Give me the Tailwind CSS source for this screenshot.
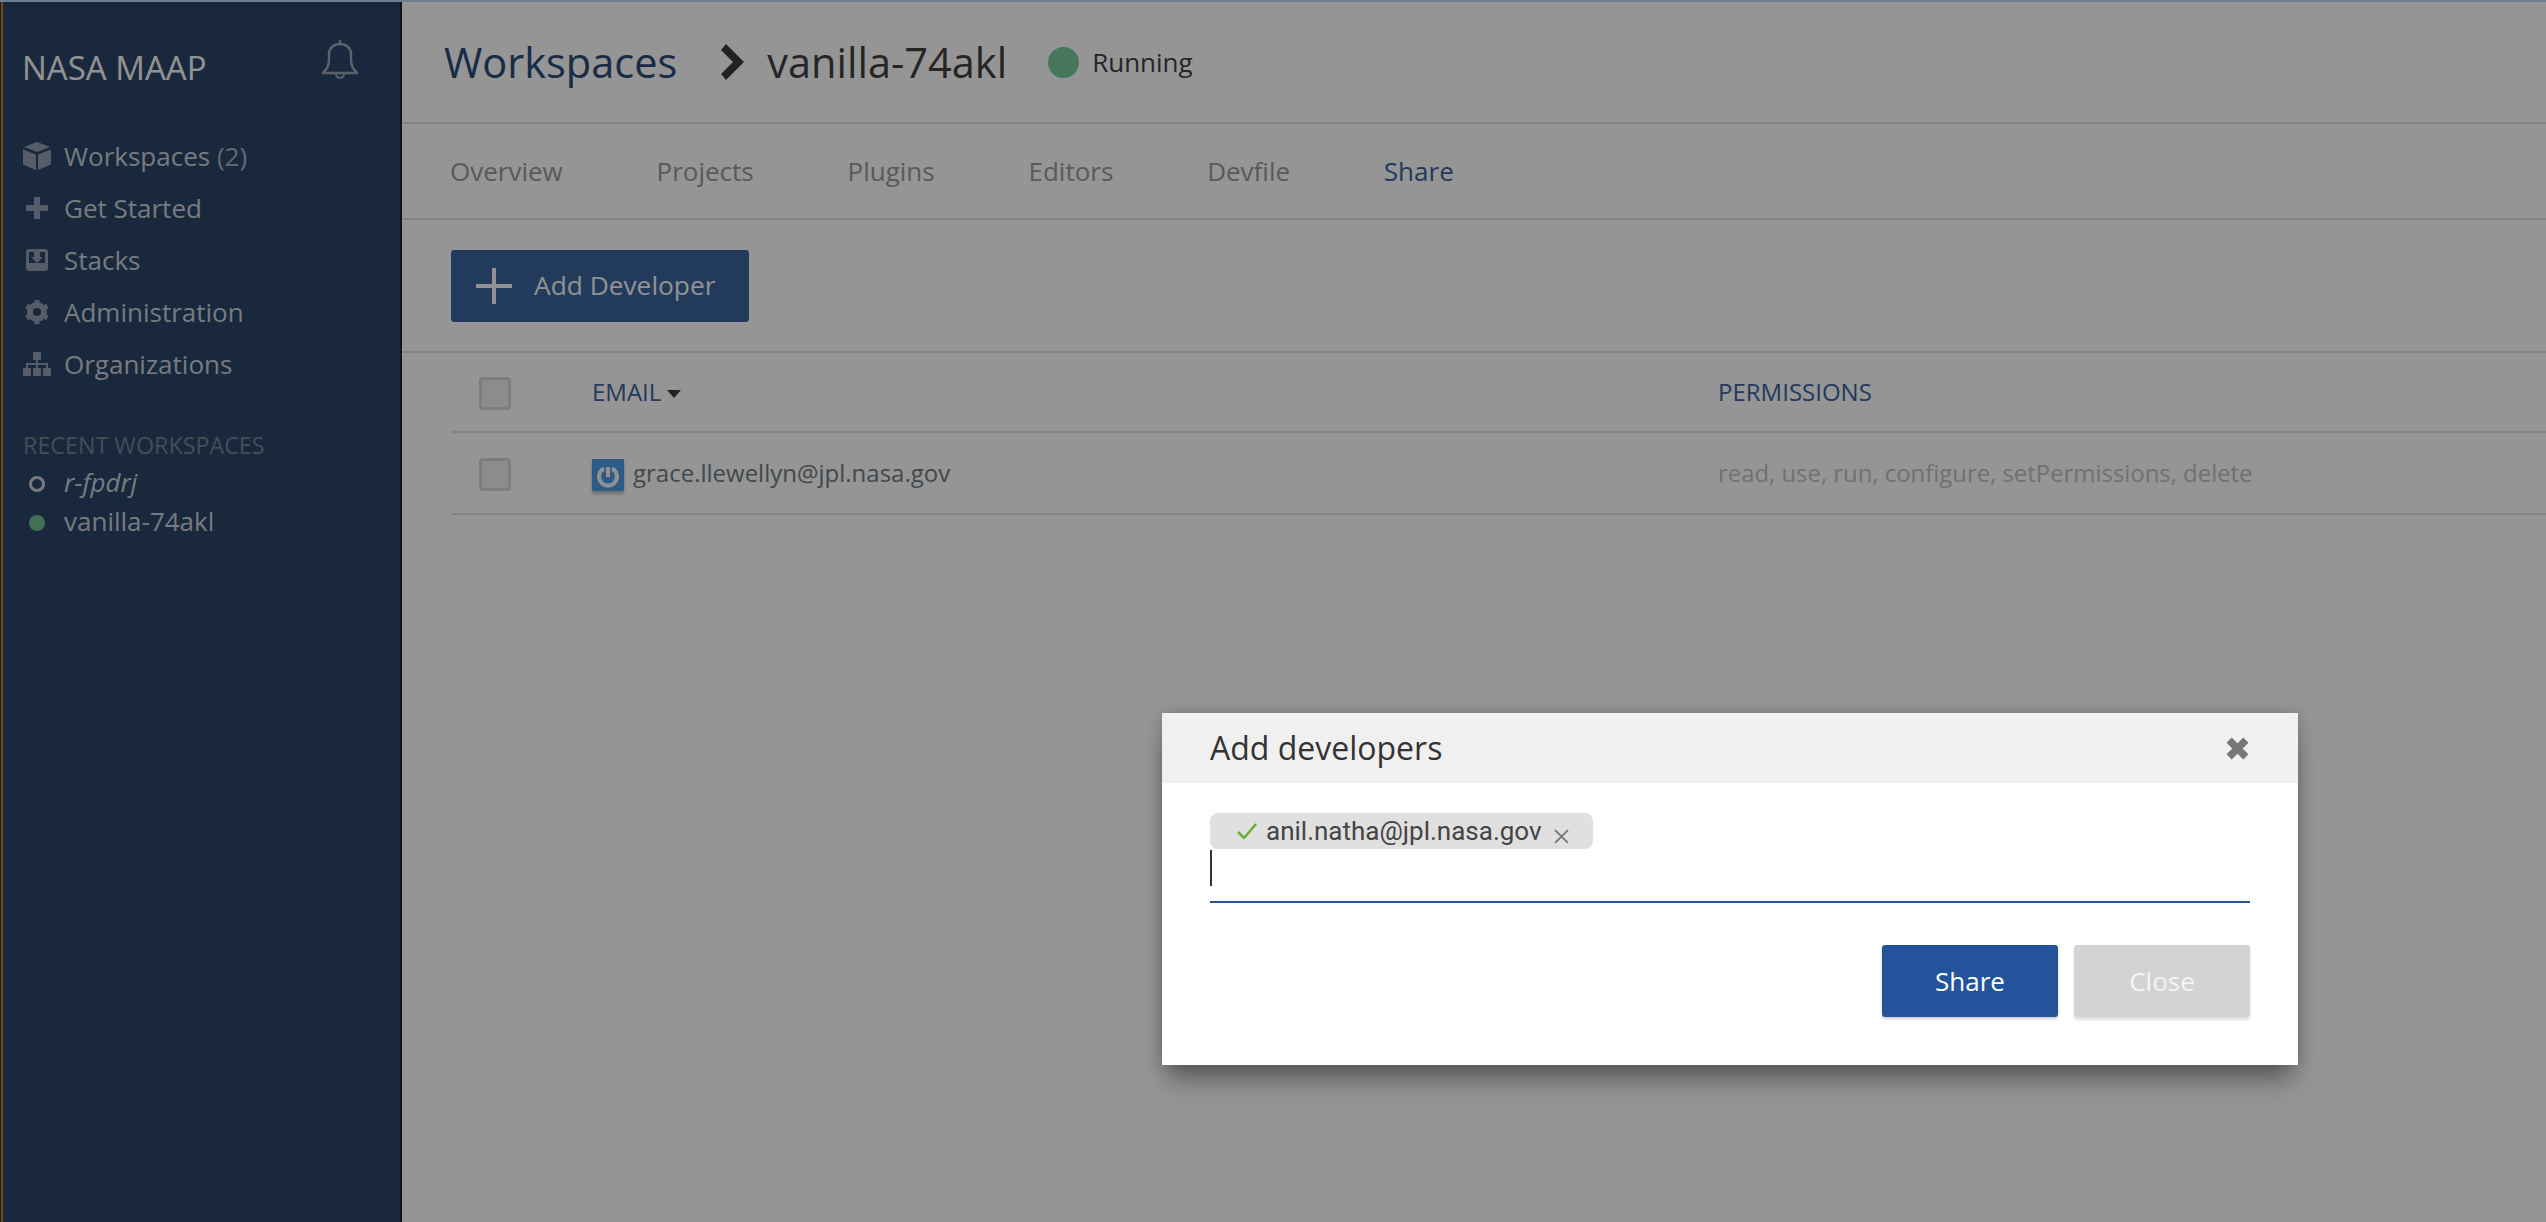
<!DOCTYPE html>
<html lang="en">
<head>
  <meta charset="UTF-8" />
  <title>NASA MAAP - Share workspace</title>
  <script src="https://cdn.jsdelivr.net/npm/@tailwindcss/browser@4"></script>
</head>
<body class="relative h-[1222px] w-[2546px] overflow-hidden bg-[#f8f8f8] font-['Open_Sans',sans-serif]">
  <div class="flex h-full flex-col">
    <div class="h-[2px] bg-[#b5d2ee]"></div>
    <div class="flex min-h-0 flex-1">

      <!-- sidebar -->
      <div class="w-px shrink-0 bg-[#333]"></div>
      <aside class="flex w-[401px] shrink-0 border-r-2 border-l-2 border-r-[#222] border-l-[#b87a32] bg-[#2a4465]">
        <div class="w-full">
          <div class="mx-[20px] flex h-[119px] items-start justify-between border-b border-[#253d5a]">
            <span class="mt-[44px] -ml-px text-[33px] leading-[44px] text-[#f4f4f4]">NASA MAAP</span>
            <svg class="mt-[36px] mr-[21px]" width="38" height="42" viewBox="0 0 38 42" fill="none" stroke="#98a3b3" stroke-width="2.5" stroke-linejoin="round">
              <path d="M2 35c4-4 6-7 6-14v-5c0-6 5-10 11-10s11 4 11 10v5c0 7 2 10 6 14z"/>
              <path d="M19 2v4"/>
              <path d="M15 36c0 5 8 5 8 0" stroke-width="2"/>
            </svg>
          </div>
          <nav class="mt-[9px] text-[26px] leading-[52px] text-[#c6ccd4]">
            <a class="flex h-[52px] items-center gap-[13px] pl-[20px]">
              <svg class="w-[28px]" width="28" height="28" viewBox="0 0 28 28" fill="#8f9cb0"><path d="M14 0l13 5-13 5L1 5z"/><path d="M0 7.500l13 5V28L0 22.500z"/><path d="M28 7.500l-13 5V28l13-5.500z"/></svg>
              <span>Workspaces <span class="text-[#a6b0bd]">(2)</span></span>
            </a>
            <a class="flex h-[52px] items-center gap-[13px] pl-[20px]">
              <svg class="w-[28px]" width="28" height="24" viewBox="0 0 28 24" fill="#8f9cb0"><path d="M11 1h6v8h8v6h-8v8h-6v-8H3V9h8z"/></svg>
              <span>Get Started</span>
            </a>
            <a class="flex h-[52px] items-center gap-[13px] pl-[20px]">
              <svg class="w-[28px]" width="28" height="24" viewBox="0 0 28 24"><rect x="3" y="1" width="22" height="22" rx="3" fill="#8f9cb0"/><rect x="6" y="4" width="16" height="11" fill="#2a4465"/><path d="M11 4h6v5h3l-6 6-6-6h3z" fill="#8f9cb0"/></svg>
              <span>Stacks</span>
            </a>
            <a class="flex h-[52px] items-center gap-[13px] pl-[20px]">
              <svg class="w-[28px]" width="28" height="26" viewBox="0 0 28 26"><circle cx="14" cy="13" r="7.500" fill="none" stroke="#8f9cb0" stroke-width="5"/><path d="M14 1v24M3.600 7l20.800 12M3.600 19L24.400 7" stroke="#8f9cb0" stroke-width="5"/><circle cx="14" cy="13" r="5" fill="#8f9cb0"/><circle cx="14" cy="13" r="4" fill="#2a4465"/></svg>
              <span>Administration</span>
            </a>
            <a class="flex h-[52px] items-center gap-[13px] pl-[20px]">
              <svg class="w-[28px]" width="28" height="24" viewBox="0 0 28 24" fill="#8f9cb0"><rect x="10" y="0" width="8" height="8" rx="1"/><rect x="0" y="16" width="8" height="8" rx="1"/><rect x="10" y="16" width="8" height="8" rx="1"/><rect x="20" y="16" width="8" height="8" rx="1"/><path d="M13 8h2v3h10v5h-2v-3H15v3h-2v-3H5v3H3v-5h10z"/></svg>
              <span>Organizations</span>
            </a>
          </nav>
          <div class="mt-[40px] pl-[20px] text-[23.3px] leading-[30px] text-[#75808f]">RECENT WORKSPACES</div>
          <div class="mt-[3px] text-[26px] text-[#c6ccd4]">
            <a class="flex h-[39px] items-center gap-[13px] pl-[20px]">
              <span class="flex w-[28px] justify-center"><span class="mt-[2px] size-[16px] rounded-full border-[3px] border-[#c6ccd4]"></span></span>
              <span class="italic">r-fpdrj</span>
            </a>
            <a class="flex h-[39px] items-center gap-[13px] pl-[20px]">
              <span class="flex w-[28px] justify-center"><span class="mt-[2px] size-[16px] rounded-full bg-[#6fbd8e]"></span></span>
              <span>vanilla-74akl</span>
            </a>
          </div>
        </div>
      </aside>

      <!-- main -->
      <main class="min-w-0 flex-1">
        <header class="flex h-[122px] items-center border-b-2 border-[#dcdcdc] pl-[42px]">
          <span class="text-[41.5px] text-[#2b4a75]">Workspaces</span>
          <svg class="mr-[22px] ml-[41px]" width="27" height="36" viewBox="0 0 27 36" fill="#3a3a3a"><path d="M3 6l5-6 18 18L8 36l-5-6 12-12z"/></svg>
          <span class="text-[41.5px] text-[#3f3f3f]">vanilla-74akl</span>
          <span class="mr-[13px] ml-[41px] size-[31px] rounded-full bg-[#75c598]"></span>
          <span class="text-[26px] text-[#3f3f3f]">Running</span>
        </header>
        <div class="flex h-[96px] items-center gap-[93.8px] border-b-2 border-[#dcdcdc] pl-[48px] text-[26px] text-[#969696]">
          <span>Overview</span>
          <span>Projects</span>
          <span>Plugins</span>
          <span>Editors</span>
          <span>Devfile</span>
          <span class="text-[#3a6299]">Share</span>
        </div>
        <div class="flex h-[133px] items-center border-b-2 border-[#dcdcdc] pl-[49px]">
          <button class="flex h-[72px] w-[298px] items-center rounded-[3px] bg-[#3a6299] pl-[25px] text-[26.3px] text-[#f2f2f2]">
            <svg width="36" height="36" viewBox="0 0 36 36" fill="none" stroke="#f2f2f2" stroke-width="4"><path d="M18 0v36M0 18h36"/></svg>
            <span class="ml-[22px]">Add Developer</span>
          </button>
        </div>
        <div class="ml-[49px]">
          <div class="flex h-[80px] items-center border-b-2 border-[#dcdcdc] text-[24px] text-[#3a6299]">
            <span class="mt-[3px] ml-[28px] h-[33px] w-[32px] rounded-[4px] border-[3px] border-[#d0d0d0] bg-[#e9e9e9]"></span>
            <span class="ml-[81px] flex w-[1126px] items-center">EMAIL<span class="mt-[4px] ml-[6px] border-x-[7px] border-t-[8px] border-x-transparent border-t-[#3a3a3a]"></span></span>
            <span>PERMISSIONS</span>
          </div>
          <div class="flex h-[82px] items-center border-b-2 border-[#dcdcdc] text-[24px]">
            <span class="mt-[3px] ml-[28px] h-[33px] w-[32px] rounded-[4px] border-[3px] border-[#d0d0d0] bg-[#e9e9e9]"></span>
            <span class="ml-[81px] flex w-[1126px] items-center text-[#707880]">
              <svg class="mt-[4px] mr-[9px] shadow-[0_3px_3px_rgba(0,0,0,.25)]" width="32" height="32" viewBox="0 0 32 32"><rect width="32" height="32" fill="#4c96e0"/><path d="M12 9.500a9 9 0 1 0 8 0" fill="none" stroke="#f4f4f4" stroke-width="4"/><path d="M16 8v10" stroke="#f4f4f4" stroke-width="4"/></svg>
              grace.llewellyn@jpl.nasa.gov
            </span>
            <span class="text-[23.9px] text-[#bcbcbc]">read, use, run, configure, setPermissions, delete</span>
          </div>
        </div>
      </main>
    </div>
  </div>

  <!-- overlay and dialog -->
  <div class="absolute inset-0 bg-black/40"></div>
  <div class="absolute top-[713px] left-[1162px] h-[352px] w-[1136px] bg-white shadow-[0_20px_24px_-6px_rgba(0,0,0,.38),0_0_14px_rgba(0,0,0,.18)]">
    <div class="flex h-[70px] items-center justify-between bg-[#f0f0f0] pr-[49px] pl-[48px]">
      <span class="text-[32px] text-[#333]">Add developers</span>
      <svg width="23" height="23" viewBox="0 0 22 22" fill="none" stroke="#777" stroke-width="7"><path d="M3 3l16 16M19 3L3 19"/></svg>
    </div>
    <div class="mx-[48px]">
      <div class="mt-[30px] h-[90px] border-b-2 border-[#22539b]">
        <div class="flex h-[36px] w-[383px] items-center rounded-[8px] bg-[#e0e0e0] pl-[27px] font-['Roboto',sans-serif] text-[26px] text-[#444]">
          <svg width="20" height="16" viewBox="0 0 20 16" fill="none" stroke="#6ab035" stroke-width="2.500"><path d="M1 9l6 6L19 1"/></svg>
          <span class="ml-[9px]">anil.natha@jpl.nasa.gov</span>
          <svg class="mt-[10px] ml-[12px]" width="15" height="15" viewBox="0 0 14 14" fill="none" stroke="#777" stroke-width="1.800"><path d="M1 1l12 12M13 1L1 13"/></svg>
        </div>
        <div class="mt-px h-[36px] w-[2px] bg-[#333]"></div>
      </div>
      <div class="mt-[42px] flex justify-end gap-[16px] text-[26px] text-white">
        <button class="h-[72px] w-[176px] rounded-[3px] bg-[#22539b] shadow-[0_2px_3px_rgba(0,0,0,.2)]">Share</button>
        <button class="h-[72px] w-[176px] rounded-[3px] bg-[#d3d3d3] text-[#f5f5f5] shadow-[0_3px_3px_rgba(0,0,0,.12)]">Close</button>
      </div>
    </div>
  </div>
</body>
</html>
